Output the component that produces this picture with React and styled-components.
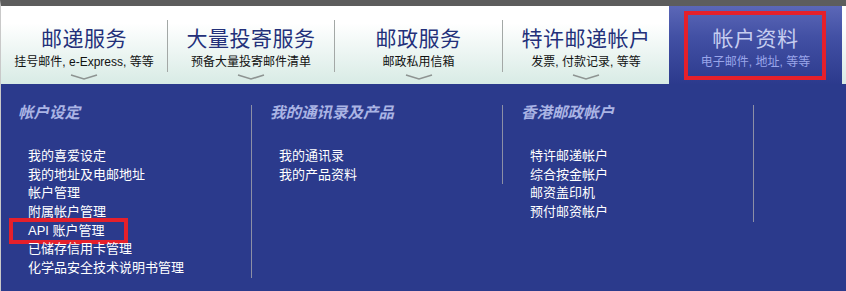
import React from 'react';
import styled, { createGlobalStyle } from 'styled-components';

const GlobalStyle = createGlobalStyle`
  html, body {
    margin: 0;
    padding: 0;
    background: #ffffff;
  }
  body {
    font-family: 'Liberation Sans', 'Noto Sans CJK SC', sans-serif;
  }
`;

const Page = styled.div`
  width: 846px;
  height: 291px;
  overflow: hidden;
  border-top: 6px solid #5d5d5d;
  border-left: 1px solid #c9c9c9;
  box-sizing: border-box;
  display: flex;
  flex-direction: column;
`;

const Header = styled.div`
  display: flex;
  height: 78px;
  background: linear-gradient(to bottom, #ffffff 0%, #ffffff 22%, #d8ebe5 100%);
`;

const Tab = styled.div`
  position: relative;
  width: ${(p) => p.$w}px;
  flex-shrink: 0;
  display: flex;
  flex-direction: column;
  align-items: center;
  padding-top: 21px;
  box-sizing: border-box;
  background: ${(p) =>
    p.$active ? 'linear-gradient(to bottom, #5b67b7 0%, #4250a4 40%, #2c3a8d 100%)' : 'transparent'};
`;

const Separator = styled.div`
  width: 1px;
  height: 52px;
  margin-top: 14px;
  background: #a3a8a6;
  flex-shrink: 0;
`;

const TabTitle = styled.div`
  font-size: 21px;
  line-height: 24px;
  letter-spacing: 0.5px;
  color: ${(p) => (p.$active ? '#c6cdf0' : '#23307a')};
  white-space: nowrap;
`;

const TabSub = styled.div`
  margin-top: 3px;
  font-size: 12px;
  line-height: 16px;
  color: ${(p) => (p.$active ? '#9aa5ea' : '#111111')};
  white-space: nowrap;
`;

const Chevron = styled.svg`
  margin-top: 4px;
  display: block;
`;

const Mark = styled.div`
  position: absolute;
  border: 4px solid #e5202b;
  box-sizing: border-box;
  pointer-events: none;
`;

const Panel = styled.div`
  flex: 1;
  background: #2b3a8c;
  display: flex;
  align-items: flex-start;
`;

const Column = styled.div`
  width: 250px;
  flex-shrink: 0;
  margin-top: 21px;
  border-right: 1px solid #8c8fa6;
`;

const Heading = styled.div`
  padding-left: ${(p) => p.$pad}px;
  font-size: 15.5px;
  line-height: 16px;
  font-style: italic;
  font-weight: bold;
  color: #aab4e4;
`;

const List = styled.ul`
  list-style: none;
  margin: 26px 0 0;
  padding: 0 0 0 ${(p) => p.$pad}px;
`;

const Item = styled.li`
  position: relative;
  font-size: 13px;
  line-height: 18.67px;
  color: #ffffff;
  white-space: nowrap;
`;

const tabs = [
  { title: '邮递服务', sub: '挂号邮件, e-Express, 等等', w: 166 },
  { title: '大量投寄服务', sub: '预备大量投寄邮件清单', w: 166 },
  { title: '邮政服务', sub: '邮政私用信箱', w: 167 },
  { title: '特许邮递帐户', sub: '发票, 付款记录, 等等', w: 166 },
  { title: '帐户资料', sub: '电子邮件, 地址, 等等', w: 172, active: true },
];

const columns = [
  {
    heading: '帐户设定',
    hp: 17,
    ip: 27,
    items: ['我的喜爱设定', '我的地址及电邮地址', '帐户管理', '附属帐户管理', 'API 账户管理', '已储存信用卡管理', '化学品安全技术说明书管理'],
  },
  { heading: '我的通讯录及产品', hp: 18, ip: 27, items: ['我的通讯录', '我的产品资料'] },
  { heading: '香港邮政帐户', hp: 18, ip: 27, items: ['特许邮递帐户', '综合按金帐户', '邮资盖印机', '预付邮资帐户'] },
];

const ChevronIcon = () => (
  <Chevron width="28" height="6" viewBox="0 0 28 6">
    <path d="M1 1 L14 5 L27 1" fill="none" stroke="#8e9492" strokeWidth="1.6" />
  </Chevron>
);

export default function App() {
  return (
    <>
      <GlobalStyle />
      <Page>
        <Header>
          {tabs.map((t, i) => (
            <React.Fragment key={t.title}>
              {i > 0 && !t.active && <Separator />}
              <Tab $w={t.w + (t.active ? 1 : 0)} $active={t.active}>
                <TabTitle $active={t.active}>{t.title}</TabTitle>
                <TabSub $active={t.active}>{t.sub}</TabSub>
                {!t.active && <ChevronIcon />}
                {t.active && <Mark style={{ left: 15, top: 5, width: 142, height: 69 }} />}
              </Tab>
            </React.Fragment>
          ))}
        </Header>
        <Panel>
          {columns.map((c) => (
            <Column key={c.heading}>
              <Heading $pad={c.hp}>{c.heading}</Heading>
              <List $pad={c.ip}>
                {c.items.map((it) => (
                  <Item key={it}>
                    {it}
                    {it.startsWith('API') && <Mark style={{ left: -19, top: -4, width: 119, height: 26 }} />}
                  </Item>
                ))}
              </List>
            </Column>
          ))}
        </Panel>
      </Page>
    </>
  );
}
